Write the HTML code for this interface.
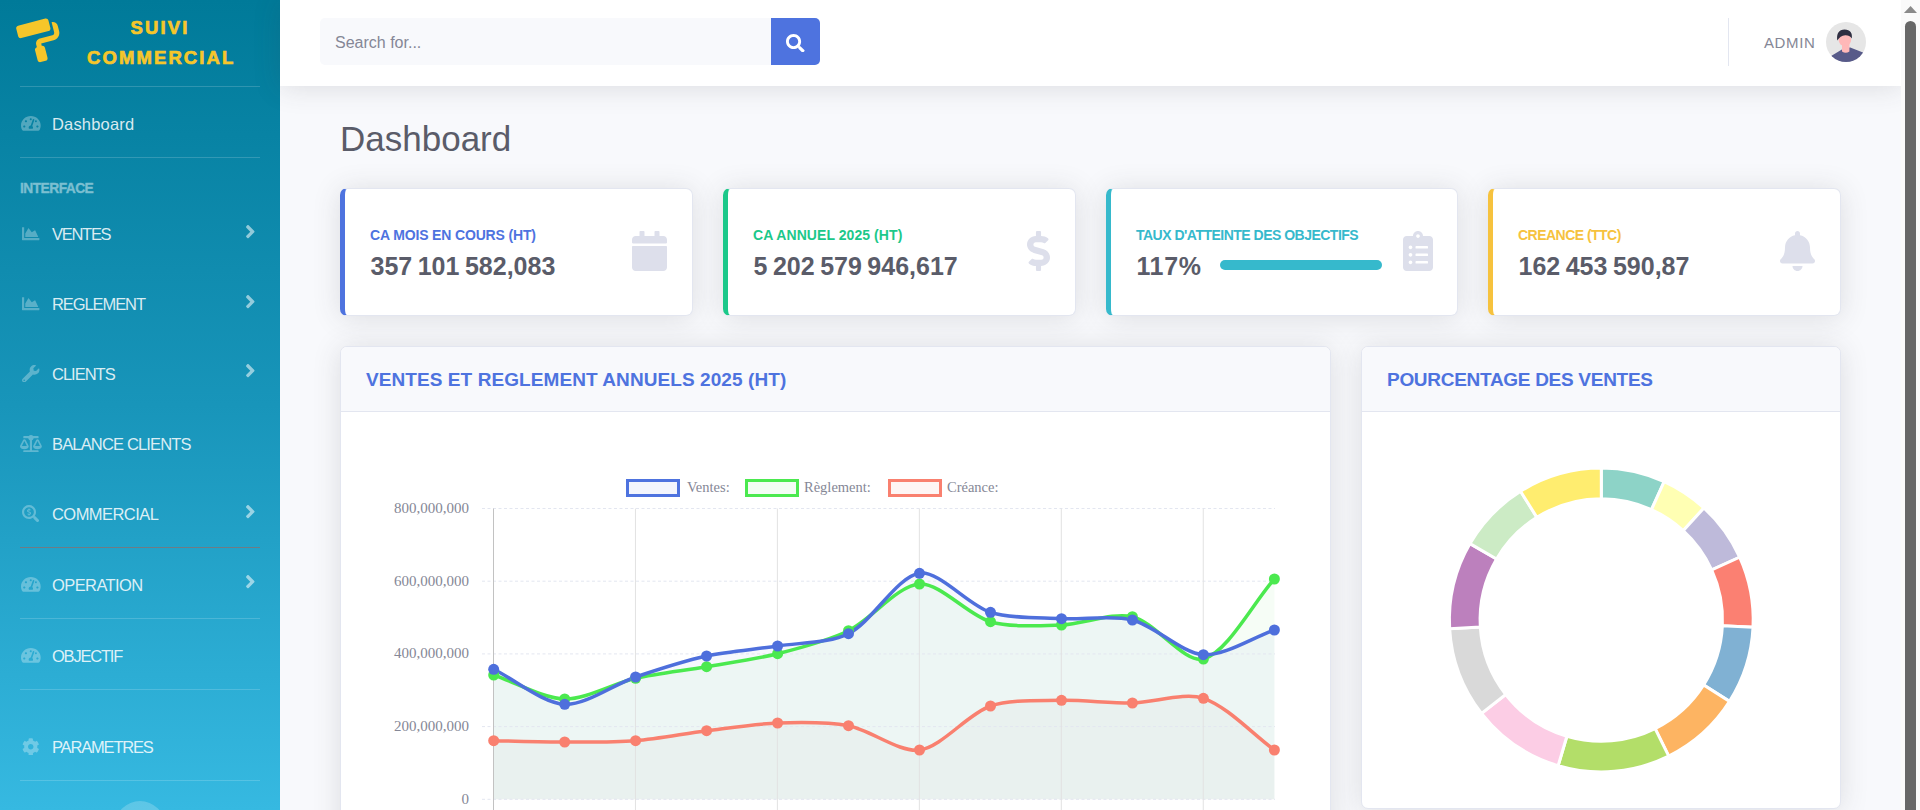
<!DOCTYPE html>
<html><head><meta charset="utf-8"><title>Dashboard</title>
<style>
*{box-sizing:border-box;margin:0;padding:0}
html,body{width:1920px;height:810px;overflow:hidden;background:#f8f9fc;font-family:"Liberation Sans",sans-serif}
.abs{position:absolute}
#side{left:0;top:0;width:280px;height:810px;background:linear-gradient(180deg,#007a99 0%,#1895ba 50%,#36b9e1 100%);overflow:hidden}
.brand{left:87px;width:146px;color:#f6c62a;font-weight:700;font-size:18.5px;letter-spacing:2.1px;-webkit-text-stroke:0.7px #f6c62a;text-align:center;line-height:1}
.hr{left:20px;width:240px;height:1px;background:rgba(255,255,255,.17)}
.nav{left:52px;color:rgba(255,255,255,.85);font-size:16px;line-height:1;white-space:nowrap}
.navu{letter-spacing:-0.55px}
.ico{fill:rgba(255,255,255,.3)}
.chev{fill:rgba(255,255,255,.55)}
.head{left:20px;color:#7bbfd1;font-weight:700;font-size:13.8px;letter-spacing:-0.55px;line-height:1;-webkit-text-stroke:0.35px #7bbfd1}
#top{left:280px;top:0;width:1622px;height:86px;background:#fff;box-shadow:0 2px 28px 0 rgba(58,59,69,.15)}
#scroll{left:1901px;top:0;width:19px;height:810px;background:#fafafa}
.card{background:#fff;border:1px solid #e3e6f0;border-radius:7px;box-shadow:0 2px 28px 0 rgba(58,59,69,.15);overflow:hidden}
.bl{position:absolute;left:0;top:0;bottom:0;width:5px}
.lab{font-weight:700;font-size:14px;line-height:1;white-space:nowrap;letter-spacing:-0.3px}
.num{font-weight:700;font-size:25px;color:#5a5c69;line-height:1;white-space:nowrap}
.cico{fill:#dddfeb}
.chd{background:#f8f9fc;border-bottom:1px solid #e3e6f0;height:65px}
.ctl{color:#4e73df;font-weight:700;font-size:19px;line-height:1;white-space:nowrap}
</style></head>
<body>
<!-- SIDEBAR -->
<div id="side" class="abs">
  <svg class="abs" style="left:0;top:0" width="80" height="80" viewBox="0 0 80 80">
    <g transform="translate(15.6 26.3) rotate(-14.5) scale(0.08)"><path fill="#f6c62a" d="M416 128V32c0-17.67-14.33-32-32-32H32C14.33 0 0 14.33 0 32v96c0 17.67 14.33 32 32 32h352c17.670 0 32-14.33 32-32zm32-64v128c0 17.67-14.33 32-32 32H256c-35.35 0-64 28.65-64 64v32c-17.67 0-32 14.33-32 32v128c0 17.67 14.33 32 32 32h64c17.67 0 32-14.33 32-32V352c0-17.67-14.33-32-32-32v-32h160c53.02 0 96-42.98 96-96v-64c0-35.35-28.65-64-64-64z"/></g>
  </svg>
  <div class="abs brand" style="top:19.3px">SUIVI</div>
  <div class="abs brand" style="top:49.3px">COMMERCIAL</div>
  <div class="abs hr" style="top:86px"></div>

  <div class="abs hr" style="top:157px"></div>
  <div class="abs head" style="top:181.5px">INTERFACE</div>

  <svg class="abs" style="left:21px;top:114.85px" width="19.70" height="16.84" viewBox="0 0 576 512" preserveAspectRatio="none"><path class="ico" d="M288 32C128.94 32 0 160.94 0 320c0 52.8 14.25 102.26 39.06 144.8 5.61 9.62 16.3 15.2 27.44 15.2h443c11.14 0 21.83-5.58 27.44-15.2C561.75 422.26 576 372.8 576 320c0-159.06-128.94-288-288-288zm0 64c14.71 0 26.58 10.13 30.32 23.65-1.11 2.26-2.64 4.23-3.450 6.67l-9.22 27.67c-5.13 3.49-10.97 6.01-17.64 6.01-17.67 0-32-14.33-32-32S270.33 96 288 96zM96 384c-17.67 0-32-14.33-32-32s14.33-32 32-32 32 14.33 32 32-14.33 32-32 32zm48-160c-17.67 0-32-14.33-32-32s14.33-32 32-32 32 14.33 32 32-14.33 32-32 32zm246.77-72.41l-61.33 184C343.13 347.33 352 364.54 352 384c0 11.72-3.38 22.55-8.88 32H232.88c-5.5-9.45-8.88-20.28-8.88-32 0-33.94 26.5-61.43 59.9-63.59l61.34-184.01c4.17-12.56 17.73-19.45 30.36-15.17 12.57 4.19 19.35 17.79 15.17 30.36zm14.66 57.2l15.52-46.55c3.47-1.29 7.13-2.23 11.05-2.23 17.67 0 32 14.33 32 32s-14.33 32-32 32c-11.38 0-20.89-6.27-26.57-15.22zM480 384c-17.67 0-32-14.33-32-32s14.33-32 32-32 32 14.33 32 32-14.33 32-32 32z"/></svg>
<div class="abs nav" style="top:116px;font-size:16.5px;letter-spacing:0.17px">Dashboard</div>
<svg class="abs" style="left:22.2px;top:225.0px" width="17.41" height="17.41" viewBox="0 0 512 512" preserveAspectRatio="none"><path class="ico" d="M500 384c6.6 0 12 5.4 12 12v40c0 6.6-5.4 12-12 12H12c-6.6 0-12-5.4-12-12V76c0-6.6 5.4-12 12-12h40c6.6 0 12 5.4 12 12v308h436zM372.7 159.5L288 216l-85.3-113.7c-5.1-6.8-15.5-6.3-19.9 1L96 248v104h384l-89.9-187.8c-3.2-6.5-11.4-8.7-17.4-4.7z"/></svg>
<div class="abs nav" style="top:226px;font-size:16.5px;letter-spacing:-1.28px">VENTES</div>
<svg class="abs" style="left:245px;top:220.5px" width="10.62" height="21.25" viewBox="0 0 256 512" preserveAspectRatio="none"><path class="chev" d="M224.3 273l-136 136c-9.4 9.4-24.6 9.4-33.9 0l-22.6-22.6c-9.4-9.4-9.4-24.6 0-33.9l96.4-96.4-96.4-96.4c-9.4-9.4-9.4-24.6 0-33.9L54.3 103c9.4-9.4 24.6-9.4 33.9 0l136 136c9.5 9.4 9.5 24.6.1 34z"/></svg>
<svg class="abs" style="left:22.2px;top:295.0px" width="17.41" height="17.41" viewBox="0 0 512 512" preserveAspectRatio="none"><path class="ico" d="M500 384c6.6 0 12 5.4 12 12v40c0 6.6-5.4 12-12 12H12c-6.6 0-12-5.4-12-12V76c0-6.6 5.4-12 12-12h40c6.6 0 12 5.4 12 12v308h436zM372.7 159.5L288 216l-85.3-113.7c-5.1-6.8-15.5-6.3-19.9 1L96 248v104h384l-89.9-187.8c-3.2-6.5-11.4-8.7-17.4-4.7z"/></svg>
<div class="abs nav" style="top:296px;font-size:16.5px;letter-spacing:-1.09px">REGLEMENT</div>
<svg class="abs" style="left:245px;top:290.5px" width="10.62" height="21.25" viewBox="0 0 256 512" preserveAspectRatio="none"><path class="chev" d="M224.3 273l-136 136c-9.4 9.4-24.6 9.4-33.9 0l-22.6-22.6c-9.4-9.4-9.4-24.6 0-33.9l96.4-96.4-96.4-96.4c-9.4-9.4-9.4-24.6 0-33.9L54.3 103c9.4-9.4 24.6-9.4 33.9 0l136 136c9.5 9.4 9.5 24.6.1 34z"/></svg>
<svg class="abs" style="left:22.3px;top:365px" width="17.41" height="17.41" viewBox="0 0 512 512" preserveAspectRatio="none"><path class="ico" d="M507.73 109.1c-2.24-9.03-13.54-12.09-20.12-5.51l-74.36 74.36-67.88-11.31-11.31-67.88 74.36-74.36c6.62-6.62 3.43-17.9-5.66-20.16-47.38-11.74-99.55.91-136.58 37.93-39.64 39.64-50.55 97.1-34.05 147.2L18.74 402.76c-24.99 24.99-24.99 65.51 0 90.5 24.99 24.99 65.51 24.99 90.5 0l213.21-213.21c50.12 16.71 107.47 5.68 147.37-34.22 37.07-37.07 49.7-89.32 37.91-136.73zM64 472c-13.25 0-24-10.75-24-24 0-13.26 10.75-24 24-24s24 10.74 24 24c0 13.25-10.75 24-24 24z"/></svg>
<div class="abs nav" style="top:366px;font-size:16.5px;letter-spacing:-1.0px">CLIENTS</div>
<svg class="abs" style="left:245px;top:360.3px" width="10.62" height="21.25" viewBox="0 0 256 512" preserveAspectRatio="none"><path class="chev" d="M224.3 273l-136 136c-9.4 9.4-24.6 9.4-33.9 0l-22.6-22.6c-9.4-9.4-9.4-24.6 0-33.9l96.4-96.4-96.4-96.4c-9.4-9.4-9.4-24.6 0-33.9L54.3 103c9.4-9.4 24.6-9.4 33.9 0l136 136c9.5 9.4 9.5 24.6.1 34z"/></svg>
<svg class="abs" style="left:19.8px;top:434.7px" width="21.89" height="17.51" viewBox="0 0 640 512" preserveAspectRatio="none"><path class="ico" d="M256 336h-.02c0-16.18 1.34-8.73-85.05-181.51-17.65-35.29-68.19-35.36-85.87 0C-2.06 328.75.02 320.33.02 336H0c0 44.18 57.31 80 128 80s128-35.82 128-80zM128 176l72 144H56l72-144zm511.98 160c0-16.18 1.34-8.73-85.05-181.51-17.65-35.29-68.19-35.36-85.87 0-87.12 174.26-85.04 165.84-85.04 181.51H384c0 44.18 57.31 80 128 80s128-35.82 128-80h-.02zM440 320l72-144 72 144H440zm88 128H352V153.3c23.51-10.29 41.16-31.48 46.39-57.3H528c8.84 0 16-7.16 16-16V48c0-8.84-7.16-16-16-16H383.64C369.04 12.68 346.09 0 320 0s-49.04 12.68-63.64 32H112c-8.84 0-16 7.16-16 16v32c0 8.84 7.16 16 16 16h129.61c5.23 25.82 22.87 47.01 46.39 57.3V448H112c-8.84 0-16 7.16-16 16v32c0 8.84 7.16 16 16 16h416c8.84 0 16-7.16 16-16v-32c0-8.84-7.16-16-16-16z"/></svg>
<div class="abs nav" style="top:436px;font-size:16.5px;letter-spacing:-0.84px">BALANCE CLIENTS</div>
<svg class="abs" style="left:22.2px;top:505px" width="17.25" height="17.25" viewBox="0 0 512 512" preserveAspectRatio="none"><path class="ico" d="M505.04 442.66l-99.71-99.69c-4.5-4.5-10.6-7-17-7h-16.3c27.6-35.3 44-79.69 44-127.99C416.03 93.09 322.92 0 208.02 0S0 93.09 0 207.98s93.11 207.98 208.02 207.98c48.3 0 92.71-16.4 128.01-44v16.3c0 6.4 2.5 12.5 7 17l99.71 99.69c9.4 9.4 24.6 9.4 33.9 0l28.3-28.3c9.4-9.4 9.4-24.59.1-33.99zm-297.02-90.7c-79.54 0-144-64.34-144-143.98 0-79.53 64.35-143.98 144-143.98 79.54 0 144 64.34 144 143.98 0 79.53-64.35 143.98-144 143.980zm27.11-152.54l-45.01-13.5c-5.16-1.55-8.77-6.78-8.77-12.73 0-7.27 5.3-13.19 11.8-13.19h28.11c4.56 0 8.96 1.29 12.82 3.72 3.24 2.03 7.36 1.91 10.13-.73l11.75-11.21c3.53-3.37 3.33-9.21-.57-12.14-9.1-6.83-20.08-10.77-31.37-11.35V112c0-4.42-3.58-8-8-8h-16c-4.42 0-8 3.58-8 8v16.12c-23.63.63-42.68 20.55-42.68 45.07 0 19.97 12.99 37.81 31.58 43.39l45.01 13.5c5.16 1.55 8.77 6.78 8.77 12.73 0 7.27-5.3 13.19-11.8 13.19h-28.1c-4.56 0-8.96-1.29-12.82-3.72-3.24-2.03-7.36-1.91-10.13.73l-11.75 11.21c-3.53 3.37-3.33 9.21.57 12.14 9.1 6.83 20.08 10.77 31.37 11.35V304c0 4.42 3.58 8 8 8h16c4.42 0 8-3.58 8-8v-16.12c23.63-.63 42.68-20.54 42.68-45.07 0-19.97-12.99-37.81-31.59-43.39z"/></svg>
<div class="abs nav" style="top:506px;font-size:16.5px;letter-spacing:-0.56px">COMMERCIAL</div>
<svg class="abs" style="left:245px;top:500.5px" width="10.62" height="21.25" viewBox="0 0 256 512" preserveAspectRatio="none"><path class="chev" d="M224.3 273l-136 136c-9.4 9.4-24.6 9.4-33.9 0l-22.6-22.6c-9.4-9.4-9.4-24.6 0-33.9l96.4-96.4-96.4-96.4c-9.4-9.4-9.4-24.6 0-33.9L54.3 103c9.4-9.4 24.6-9.4 33.9 0l136 136c9.5 9.4 9.5 24.6.1 34z"/></svg>
<svg class="abs" style="left:21px;top:576.05px" width="19.70" height="16.84" viewBox="0 0 576 512" preserveAspectRatio="none"><path class="ico" d="M288 32C128.94 32 0 160.94 0 320c0 52.8 14.25 102.26 39.06 144.8 5.61 9.62 16.3 15.2 27.44 15.2h443c11.14 0 21.83-5.58 27.44-15.2C561.75 422.26 576 372.8 576 320c0-159.06-128.94-288-288-288zm0 64c14.71 0 26.58 10.13 30.32 23.65-1.11 2.26-2.64 4.23-3.450 6.67l-9.22 27.67c-5.13 3.49-10.97 6.01-17.64 6.01-17.67 0-32-14.33-32-32S270.33 96 288 96zM96 384c-17.67 0-32-14.33-32-32s14.33-32 32-32 32 14.33 32 32-14.33 32-32 32zm48-160c-17.67 0-32-14.33-32-32s14.33-32 32-32 32 14.33 32 32-14.33 32-32 32zm246.77-72.41l-61.33 184C343.13 347.33 352 364.54 352 384c0 11.72-3.38 22.55-8.88 32H232.88c-5.5-9.45-8.88-20.28-8.88-32 0-33.94 26.5-61.43 59.9-63.59l61.34-184.01c4.17-12.56 17.73-19.45 30.36-15.17 12.57 4.19 19.35 17.79 15.17 30.36zm14.66 57.2l15.52-46.55c3.47-1.29 7.13-2.23 11.05-2.23 17.67 0 32 14.33 32 32s-14.33 32-32 32c-11.38 0-20.89-6.27-26.57-15.22zM480 384c-17.67 0-32-14.33-32-32s14.33-32 32-32 32 14.33 32 32-14.33 32-32 32z"/></svg>
<div class="abs nav" style="top:577px;font-size:16.5px;letter-spacing:-0.59px">OPERATION</div>
<svg class="abs" style="left:245px;top:571.25px" width="10.62" height="21.25" viewBox="0 0 256 512" preserveAspectRatio="none"><path class="chev" d="M224.3 273l-136 136c-9.4 9.4-24.6 9.4-33.9 0l-22.6-22.6c-9.4-9.4-9.4-24.6 0-33.9l96.4-96.4-96.4-96.4c-9.4-9.4-9.4-24.6 0-33.9L54.3 103c9.4-9.4 24.6-9.4 33.9 0l136 136c9.5 9.4 9.5 24.6.1 34z"/></svg>
<svg class="abs" style="left:21px;top:646.85px" width="19.70" height="16.84" viewBox="0 0 576 512" preserveAspectRatio="none"><path class="ico" d="M288 32C128.94 32 0 160.94 0 320c0 52.8 14.25 102.26 39.06 144.8 5.61 9.62 16.3 15.2 27.44 15.2h443c11.14 0 21.83-5.58 27.44-15.2C561.75 422.26 576 372.8 576 320c0-159.06-128.94-288-288-288zm0 64c14.71 0 26.58 10.13 30.32 23.65-1.11 2.26-2.64 4.23-3.450 6.67l-9.22 27.67c-5.13 3.49-10.97 6.01-17.64 6.01-17.67 0-32-14.33-32-32S270.33 96 288 96zM96 384c-17.67 0-32-14.33-32-32s14.33-32 32-32 32 14.33 32 32-14.33 32-32 32zm48-160c-17.67 0-32-14.33-32-32s14.33-32 32-32 32 14.33 32 32-14.33 32-32 32zm246.77-72.41l-61.33 184C343.13 347.33 352 364.54 352 384c0 11.72-3.38 22.55-8.88 32H232.88c-5.5-9.45-8.88-20.28-8.88-32 0-33.94 26.5-61.43 59.9-63.59l61.34-184.01c4.17-12.56 17.73-19.45 30.36-15.17 12.57 4.19 19.35 17.79 15.17 30.36zm14.66 57.2l15.52-46.55c3.47-1.29 7.13-2.23 11.05-2.23 17.67 0 32 14.33 32 32s-14.33 32-32 32c-11.38 0-20.89-6.27-26.57-15.22zM480 384c-17.67 0-32-14.33-32-32s14.33-32 32-32 32 14.33 32 32-14.33 32-32 32z"/></svg>
<div class="abs nav" style="top:648px;font-size:16.5px;letter-spacing:-1.21px">OBJECTIF</div>
<svg class="abs" style="left:22.3px;top:737.6px" width="17.51" height="17.51" viewBox="0 0 512 512" preserveAspectRatio="none"><path class="ico" d="M487.4 315.7l-42.6-24.6c4.3-23.2 4.3-47 0-70.2l42.6-24.6c4.9-2.8 7.1-8.6 5.5-14-11.1-35.6-30-67.8-54.7-94.6-3.8-4.1-10-5.1-14.8-2.3L380.8 110c-17.9-15.4-38.5-27.3-60.8-35.1V25.8c0-5.6-3.9-10.5-9.4-11.7-36.7-8.2-74.3-7.8-109.2 0-5.5 1.2-9.4 6.1-9.4 11.7V75c-22.2 7.9-42.8 19.8-60.8 35.1L88.7 85.5c-4.9-2.8-11-1.9-14.8 2.3-24.7 26.7-43.6 58.9-54.7 94.6-1.7 5.4.6 11.2 5.5 14L67.3 221c-4.3 23.2-4.3 47 0 70.2l-42.6 24.6c-4.9 2.8-7.1 8.6-5.5 14 11.1 35.6 30 67.8 54.7 94.6 3.8 4.1 10 5.1 14.8 2.3l42.6-24.6c17.9 15.4 38.5 27.3 60.8 35.1v49.2c0 5.6 3.9 10.5 9.4 11.7 36.7 8.2 74.3 7.8 109.2 0 5.5-1.2 9.4-6.1 9.4-11.7v-49.2c22.2-7.9 42.8-19.8 60.8-35.1l42.6 24.6c4.9 2.8 11 1.9 14.8-2.3 24.7-26.7 43.6-58.9 54.7-94.6 1.5-5.5-.7-11.3-5.6-14.1zM256 336c-44.1 0-80-35.9-80-80s35.9-80 80-80 80 35.9 80 80-35.9 80-80 80z"/></svg>
<div class="abs nav" style="top:739px;font-size:16.5px;letter-spacing:-1.18px">PARAMETRES</div>
<div class="abs" style="left:20px;top:547px;width:240px;height:1px;background:#6f7c84"></div>
<div class="abs hr" style="top:618px"></div>
<div class="abs hr" style="top:689px"></div>
<div class="abs hr" style="top:780px"></div>
<div class="abs" style="left:115px;top:801px;width:50px;height:50px;border-radius:50%;background:rgba(255,255,255,.2)"></div>
</div>

<!-- TOPBAR -->
<div id="top" class="abs">
  <div class="abs" style="left:40px;top:18px;width:451px;height:47px;background:#f8f9fc;border-radius:5px 0 0 5px"></div>
  <div class="abs" style="left:55px;top:35px;color:#858796;font-size:16px;line-height:1">Search for...</div>
  <div class="abs" style="left:491px;top:18px;width:49px;height:47px;background:#4e73df;border-radius:0 5px 5px 0"></div>
  <svg class="abs" style="left:506.3px;top:33.7px" width="18.6" height="18.6" viewBox="0 0 512 512"><path fill="#fff" d="M505 442.7L405.3 343c-4.5-4.5-10.6-7-17-7H372c27.6-35.3 44-79.7 44-128C416 93.1 322.9 0 208 0S0 93.1 0 208s93.1 208 208 208c48.3 0 92.7-16.4 128-44v16.3c0 6.4 2.5 12.5 7 17l99.7 99.7c9.4 9.4 24.6 9.4 33.9 0l28.3-28.300c9.4-9.4 9.4-24.6.1-34zM208 336c-70.7 0-128-57.2-128-128 0-70.7 57.2-128 128-128 70.7 0 128 57.2 128 128 0 70.7-57.2 128-128 128z"/></svg>
  <div class="abs" style="left:1448px;top:18px;width:1px;height:48px;background:#e3e6f0"></div>
  <div class="abs" style="left:1484px;top:34.7px;color:#858796;font-size:15px;line-height:1;letter-spacing:0.6px">ADMIN</div>
  <svg class="abs" style="left:1546px;top:22px" width="40" height="40" viewBox="0 0 40 40">
    <defs><clipPath id="av"><circle cx="20" cy="20" r="20"/></clipPath></defs>
    <circle cx="20" cy="20" r="20" fill="#e6e6e6"/>
    <g clip-path="url(#av)">
      <path d="M5.5 33.8 L16.3 27.2 Q19.8 31.8 23.6 25.3 L37 30.4 L40 40 L0 40 Z" fill="#575a89"/>
      <path d="M16 21 H23.4 V29.6 Q19.7 32 16 29.6 Z" fill="#ffb8b8"/>
      <ellipse cx="18.9" cy="17.7" rx="6.3" ry="6.3" fill="#ffb8b8"/>
      <path d="M11.3 18.6 C10.3 12 12.8 7.6 18.6 7.6 C24.3 7.6 26.6 11.2 25.8 16.4 C24.2 14.2 22.2 13.1 19.2 13.2 C15.7 13.3 13.3 15.2 11.3 18.6 Z" fill="#2f2e41"/>
    </g>
  </svg>
</div>

<!-- SCROLLBAR -->
<div id="scroll" class="abs">
  <svg class="abs" style="left:0;top:0" width="19" height="20" viewBox="0 0 19 20"><path d="M2.9 12.9 L9.6 5.9 L16 12.9Z" fill="#8a8a8a"/></svg>
  <div class="abs" style="left:4px;top:21px;width:11px;height:800px;background:#676767;border-radius:5.5px 5.5px 0 0"></div>
</div>

<!-- MAIN CONTENT -->
<div class="abs" style="left:340px;top:121px;color:#5a5c69;font-size:35px;line-height:1">Dashboard</div>

<div class="abs card" style="left:340px;top:188px;width:353px;height:128px;border-left:5px solid #4e73df"></div>
<div class="abs lab" style="left:370px;top:228px;color:#4e73df;letter-spacing:-0.15px">CA MOIS EN COURS (HT)</div>
<div class="abs num" style="left:370.5px;top:254px">357<span style="display:inline-block;width:5.5px"></span>101<span style="display:inline-block;width:5.5px"></span>582,083</div>
<svg class="abs" style="left:632px;top:231px" width="35" height="40" viewBox="0 0 448 512" preserveAspectRatio="none"><path class="cico" d="M12 192h424c6.6 0 12 5.4 12 12v260c0 26.5-21.5 48-48 48H48c-26.5 0-48-21.5-48-48V204c0-6.6 5.4-12 12-12zm436-44v-36c0-26.5-21.5-48-48-48h-48V12c0-6.6-5.4-12-12-12h-40c-6.6 0-12 5.4-12 12v52H160V12c0-6.6-5.4-12-12-12h-40c-6.6 0-12 5.4-12 12v52H48C21.5 64 0 85.5 0 112v36c0 6.6 5.4 12 12 12h424c6.6 0 12-5.4 12-12z"/></svg>
<div class="abs card" style="left:723px;top:188px;width:353px;height:128px;border-left:5px solid #1cc88a"></div>
<div class="abs lab" style="left:753px;top:228px;color:#1cc88a;letter-spacing:0.07px">CA ANNUEL 2025 (HT)</div>
<div class="abs num" style="left:753.5px;top:254px">5<span style="display:inline-block;width:5.5px"></span>202<span style="display:inline-block;width:5.5px"></span>579<span style="display:inline-block;width:5.5px"></span>946,617</div>
<svg class="abs" style="left:1027px;top:231px" width="23" height="40" viewBox="0 0 288 512" preserveAspectRatio="none"><path class="cico" d="M209.2 233.4l-108-31.6C88.7 198.2 80 186.5 80 173.5c0-16.3 13.2-29.5 29.5-29.5h66.3c12.2 0 24.2 3.7 34.2 10.5 6.1 4.1 14.3 3.1 19.5-2l34.8-34c7.1-6.9 6.1-18.4-1.8-24.5C238 74.8 207.4 64.1 176 64V16c0-8.8-7.2-16-16-16h-32c-8.8 0-16 7.2-16 16v48h-2.5C45.8 64-5.4 118.7.5 183.6c4.2 46.1 39.4 83.6 83.8 96.6l102.5 30c12.5 3.7 21.2 15.3 21.2 28.3 0 16.3-13.2 29.5-29.5 29.5h-66.3C100 368 88 364.3 78 357.5c-6.1-4.1-14.3-3.1-19.5 2l-34.8 34c-7.1 6.9-6.1 18.4 1.8 24.5 24.5 19.2 55.1 29.9 86.5 30v48c0 8.8 7.2 16 16 16h32c8.8 0 16-7.2 16-16v-48.2c46.6-.9 90.3-28.6 105.7-72.7 21.5-61.6-14.6-124.8-72.5-141.7z"/></svg>
<div class="abs card" style="left:1106px;top:188px;width:352px;height:128px;border-left:5px solid #36b9cc"></div>
<div class="abs lab" style="left:1136px;top:228px;color:#36b9cc;letter-spacing:-0.51px">TAUX D'ATTEINTE DES OBJECTIFS</div>
<div class="abs num" style="left:1136.5px;top:254px;letter-spacing:0.6px">117%</div>
<svg class="abs" style="left:1402.5px;top:231px" width="30" height="40" viewBox="0 0 384 512" preserveAspectRatio="none"><path class="cico" d="M336 64h-80c0-35.3-28.7-64-64-64s-64 28.7-64 64H48C21.5 64 0 85.5 0 112v352c0 26.5 21.5 48 48 48h288c26.5 0 48-21.5 48-48V112c0-26.5-21.5-48-48-48zM96 424c-13.3 0-24-10.7-24-24s10.7-24 24-24 24 10.7 24 24-10.7 24-24 24zm0-96c-13.3 0-24-10.7-24-24s10.7-24 24-24 24 10.7 24 24-10.7 24-24 24zm0-96c-13.3 0-24-10.7-24-24s10.7-24 24-24 24 10.7 24 24-10.7 24-24 24zm96-192c13.3 0 24 10.7 24 24s-10.7 24-24 24-24-10.7-24-24 10.7-24 24-24zm128 368c0 4.4-3.6 8-8 8H168c-4.4 0-8-3.6-8-8v-16c0-4.4 3.6-8 8-8h144c4.4 0 8 3.6 8 8v16zm0-96c0 4.4-3.6 8-8 8H168c-4.4 0-8-3.6-8-8v-16c0-4.4 3.6-8 8-8h144c4.4 0 8 3.6 8 8v16zm0-96c0 4.4-3.6 8-8 8H168c-4.4 0-8-3.6-8-8v-16c0-4.4 3.6-8 8-8h144c4.4 0 8 3.6 8 8v16z"/></svg>
<div class="abs card" style="left:1488px;top:188px;width:353px;height:128px;border-left:5px solid #f6c23e"></div>
<div class="abs lab" style="left:1518px;top:228px;color:#f6c23e;letter-spacing:-0.53px">CREANCE (TTC)</div>
<div class="abs num" style="left:1518.5px;top:254px">162<span style="display:inline-block;width:5.5px"></span>453<span style="display:inline-block;width:5.5px"></span>590,87</div>
<svg class="abs" style="left:1780px;top:231px" width="35" height="40" viewBox="0 0 448 512" preserveAspectRatio="none"><path class="cico" d="M224 512c35.32 0 63.97-28.65 63.97-64H160.03c0 35.35 28.65 64 63.97 64zm215.39-149.71c-19.32-20.76-55.47-51.99-55.47-154.29 0-77.7-54.48-139.9-127.94-155.16V32c0-17.67-14.32-32-31.98-32s-31.98 14.33-31.98 32v20.84C118.56 68.1 64.08 130.3 64.08 208c0 102.3-36.15 133.53-55.47 154.29-6 6.45-8.66 14.16-8.61 21.71.11 16.4 12.98 32 32.1 32h383.8c19.12 0 32-15.6 32.1-32 .05-7.55-2.61-15.27-8.61-21.710z"/></svg>
<div class="abs" style="left:1220px;top:260px;width:162px;height:10px;border-radius:5px;background:#36b9cc"></div>

<!-- chart card -->
<div class="abs card" style="left:340px;top:346px;width:991px;height:520px">
  <div class="chd"></div>
  <div class="abs ctl" style="left:25px;top:23px;letter-spacing:0.08px">VENTES ET REGLEMENT ANNUELS 2025 (HT)</div>
</div>
<!-- donut card -->
<div class="abs card" style="left:1361px;top:346px;width:480px;height:463px">
  <div class="chd"></div>
  <div class="abs ctl" style="left:25px;top:23px;letter-spacing:-0.29px">POURCENTAGE DES VENTES</div>
</div>

<svg class="abs" style="left:0;top:0" width="1920" height="810" viewBox="0 0 1920 810">
<path d="M493.7 740.7 C515.0 741.1 543.4 742.0 564.7 742.0 C586.0 742.0 614.5 742.4 635.6 740.7 C657.0 739.0 685.3 733.4 706.6 730.7 C727.9 728.1 756.2 723.8 777.6 723.0 C798.8 722.3 827.8 721.8 848.5 725.7 C870.4 729.9 899.4 752.8 919.5 750.0 C942.0 746.9 967.5 714.0 990.5 706.0 C1010.1 699.1 1040.1 700.8 1061.5 700.3 C1082.7 699.9 1111.2 703.3 1132.4 703.0 C1153.7 702.7 1184.3 692.0 1203.4 698.3 C1226.9 706.1 1253.1 734.5 1274.4 750.0 L1274.4 799.3 L493.7 799.3 Z" fill="rgba(150,130,130,0.04)"/>
<path d="M493.7 675.0 C515.0 682.2 543.2 698.5 564.7 699.0 C585.8 699.5 614.1 683.2 635.6 678.3 C656.6 673.5 685.4 670.4 706.6 666.7 C727.9 663.0 756.6 659.0 777.6 653.7 C799.2 648.2 828.6 640.5 848.5 630.7 C871.2 619.6 897.6 585.4 919.5 584.0 C940.2 582.7 967.9 615.2 990.5 621.7 C1010.5 627.5 1040.2 625.7 1061.5 625.0 C1082.8 624.2 1112.7 612.0 1132.4 616.7 C1155.3 622.2 1184.8 663.9 1203.4 659.0 C1227.4 652.6 1253.1 603.0 1274.4 579.0 L1274.4 799.3 L493.7 799.3 Z" fill="rgba(70,210,70,0.05)"/>
<path d="M493.7 669.3 C515.0 679.8 543.0 703.1 564.7 704.3 C585.5 705.4 614.1 684.3 635.6 677.0 C656.6 669.9 685.0 660.7 706.6 656.0 C727.6 651.4 756.3 649.3 777.6 646.0 C798.9 642.6 830.0 643.2 848.5 633.7 C872.6 621.4 896.7 576.7 919.5 573.3 C939.3 570.3 967.8 605.1 990.5 612.3 C1010.4 618.7 1040.1 617.5 1061.5 618.7 C1082.7 619.9 1112.3 614.9 1132.4 620.0 C1154.9 625.7 1181.6 653.2 1203.4 654.7 C1224.2 656.2 1253.1 637.4 1274.4 630.0 L1274.4 799.3 L493.7 799.3 Z" fill="rgba(78,115,223,0.05)"/>
<line x1="482" y1="799.3" x2="1275" y2="799.3" stroke="#e3e6f0" stroke-width="1" stroke-dasharray="3 2.5"/>
<text x="469" y="803.8" text-anchor="end" font-family="Liberation Serif" font-size="15" fill="#858796">0</text>
<line x1="482" y1="726.6" x2="1275" y2="726.6" stroke="#e3e6f0" stroke-width="1" stroke-dasharray="3 2.5"/>
<text x="469" y="731.1" text-anchor="end" font-family="Liberation Serif" font-size="15" fill="#858796">200,000,000</text>
<line x1="482" y1="653.9" x2="1275" y2="653.9" stroke="#e3e6f0" stroke-width="1" stroke-dasharray="3 2.5"/>
<text x="469" y="658.4" text-anchor="end" font-family="Liberation Serif" font-size="15" fill="#858796">400,000,000</text>
<line x1="482" y1="581.2" x2="1275" y2="581.2" stroke="#e3e6f0" stroke-width="1" stroke-dasharray="3 2.5"/>
<text x="469" y="585.7" text-anchor="end" font-family="Liberation Serif" font-size="15" fill="#858796">600,000,000</text>
<line x1="482" y1="508.5" x2="1275" y2="508.5" stroke="#e3e6f0" stroke-width="1" stroke-dasharray="3 2.5"/>
<text x="469" y="513.0" text-anchor="end" font-family="Liberation Serif" font-size="15" fill="#858796">800,000,000</text>
<line x1="635.45" y1="508.5" x2="635.45" y2="810" stroke="#e2e2e2" stroke-width="1"/>
<line x1="777.40" y1="508.5" x2="777.40" y2="810" stroke="#e2e2e2" stroke-width="1"/>
<line x1="919.35" y1="508.5" x2="919.35" y2="810" stroke="#e2e2e2" stroke-width="1"/>
<line x1="1061.30" y1="508.5" x2="1061.30" y2="810" stroke="#e2e2e2" stroke-width="1"/>
<line x1="1203.25" y1="508.5" x2="1203.25" y2="810" stroke="#e2e2e2" stroke-width="1"/>
<line x1="493.5" y1="508.5" x2="493.5" y2="810" stroke="#c2c2c2" stroke-width="1"/>
<path d="M493.7 740.7 C515.0 741.1 543.4 742.0 564.7 742.0 C586.0 742.0 614.5 742.4 635.6 740.7 C657.0 739.0 685.3 733.4 706.6 730.7 C727.9 728.1 756.2 723.8 777.6 723.0 C798.8 722.3 827.8 721.8 848.5 725.7 C870.4 729.9 899.4 752.8 919.5 750.0 C942.0 746.9 967.5 714.0 990.5 706.0 C1010.1 699.1 1040.1 700.8 1061.5 700.3 C1082.7 699.9 1111.2 703.3 1132.4 703.0 C1153.7 702.7 1184.3 692.0 1203.4 698.3 C1226.9 706.1 1253.1 734.5 1274.4 750.0" fill="none" stroke="#f9806f" stroke-width="3.5"/>
<path d="M493.7 675.0 C515.0 682.2 543.2 698.5 564.7 699.0 C585.8 699.5 614.1 683.2 635.6 678.3 C656.6 673.5 685.4 670.4 706.6 666.7 C727.9 663.0 756.6 659.0 777.6 653.7 C799.2 648.2 828.6 640.5 848.5 630.7 C871.2 619.6 897.6 585.4 919.5 584.0 C940.2 582.7 967.9 615.2 990.5 621.7 C1010.5 627.5 1040.2 625.7 1061.5 625.0 C1082.8 624.2 1112.7 612.0 1132.4 616.7 C1155.3 622.2 1184.8 663.9 1203.4 659.0 C1227.4 652.6 1253.1 603.0 1274.4 579.0" fill="none" stroke="#4be94f" stroke-width="3.5"/>
<path d="M493.7 669.3 C515.0 679.8 543.0 703.1 564.7 704.3 C585.5 705.4 614.1 684.3 635.6 677.0 C656.6 669.9 685.0 660.7 706.6 656.0 C727.6 651.4 756.3 649.3 777.6 646.0 C798.9 642.6 830.0 643.2 848.5 633.7 C872.6 621.4 896.7 576.7 919.5 573.3 C939.3 570.3 967.8 605.1 990.5 612.3 C1010.4 618.7 1040.1 617.5 1061.5 618.7 C1082.7 619.9 1112.3 614.9 1132.4 620.0 C1154.9 625.7 1181.6 653.2 1203.4 654.7 C1224.2 656.2 1253.1 637.4 1274.4 630.0" fill="none" stroke="#4e6fdc" stroke-width="3.5"/>
<circle cx="493.7" cy="740.7" r="5.5" fill="#f9806f"/>
<circle cx="564.7" cy="742.0" r="5.5" fill="#f9806f"/>
<circle cx="635.6" cy="740.7" r="5.5" fill="#f9806f"/>
<circle cx="706.6" cy="730.7" r="5.5" fill="#f9806f"/>
<circle cx="777.6" cy="723.0" r="5.5" fill="#f9806f"/>
<circle cx="848.5" cy="725.7" r="5.5" fill="#f9806f"/>
<circle cx="919.5" cy="750.0" r="5.5" fill="#f9806f"/>
<circle cx="990.5" cy="706.0" r="5.5" fill="#f9806f"/>
<circle cx="1061.5" cy="700.3" r="5.5" fill="#f9806f"/>
<circle cx="1132.4" cy="703.0" r="5.5" fill="#f9806f"/>
<circle cx="1203.4" cy="698.3" r="5.5" fill="#f9806f"/>
<circle cx="1274.4" cy="750.0" r="5.5" fill="#f9806f"/>
<circle cx="493.7" cy="675.0" r="5.5" fill="#4be94f"/>
<circle cx="564.7" cy="699.0" r="5.5" fill="#4be94f"/>
<circle cx="635.6" cy="678.3" r="5.5" fill="#4be94f"/>
<circle cx="706.6" cy="666.7" r="5.5" fill="#4be94f"/>
<circle cx="777.6" cy="653.7" r="5.5" fill="#4be94f"/>
<circle cx="848.5" cy="630.7" r="5.5" fill="#4be94f"/>
<circle cx="919.5" cy="584.0" r="5.5" fill="#4be94f"/>
<circle cx="990.5" cy="621.7" r="5.5" fill="#4be94f"/>
<circle cx="1061.5" cy="625.0" r="5.5" fill="#4be94f"/>
<circle cx="1132.4" cy="616.7" r="5.5" fill="#4be94f"/>
<circle cx="1203.4" cy="659.0" r="5.5" fill="#4be94f"/>
<circle cx="1274.4" cy="579.0" r="5.5" fill="#4be94f"/>
<circle cx="493.7" cy="669.3" r="5.5" fill="#4e6fdc"/>
<circle cx="564.7" cy="704.3" r="5.5" fill="#4e6fdc"/>
<circle cx="635.6" cy="677.0" r="5.5" fill="#4e6fdc"/>
<circle cx="706.6" cy="656.0" r="5.5" fill="#4e6fdc"/>
<circle cx="777.6" cy="646.0" r="5.5" fill="#4e6fdc"/>
<circle cx="848.5" cy="633.7" r="5.5" fill="#4e6fdc"/>
<circle cx="919.5" cy="573.3" r="5.5" fill="#4e6fdc"/>
<circle cx="990.5" cy="612.3" r="5.5" fill="#4e6fdc"/>
<circle cx="1061.5" cy="618.7" r="5.5" fill="#4e6fdc"/>
<circle cx="1132.4" cy="620.0" r="5.5" fill="#4e6fdc"/>
<circle cx="1203.4" cy="654.7" r="5.5" fill="#4e6fdc"/>
<circle cx="1274.4" cy="630.0" r="5.5" fill="#4e6fdc"/>
<path d="M1601.30 468.10 A151.9 151.9 0 0 1 1664.17 481.72 L1651.46 509.67 A121.2 121.2 0 0 0 1601.30 498.80 Z" fill="#8dd3c7" stroke="#fff" stroke-width="3"/>
<path d="M1664.17 481.72 A151.9 151.9 0 0 1 1703.92 508.01 L1683.18 530.64 A121.2 121.2 0 0 0 1651.46 509.67 Z" fill="#ffffb3" stroke="#fff" stroke-width="3"/>
<path d="M1703.92 508.01 A151.9 151.9 0 0 1 1739.63 557.25 L1711.67 569.93 A121.2 121.2 0 0 0 1683.18 530.64 Z" fill="#bebada" stroke="#fff" stroke-width="3"/>
<path d="M1739.63 557.25 A151.9 151.9 0 0 1 1753.03 627.16 L1722.37 625.71 A121.2 121.2 0 0 0 1711.67 569.93 Z" fill="#fb8072" stroke="#fff" stroke-width="3"/>
<path d="M1753.03 627.16 A151.9 151.9 0 0 1 1729.55 701.39 L1703.63 684.94 A121.2 121.2 0 0 0 1722.37 625.71 Z" fill="#80b1d3" stroke="#fff" stroke-width="3"/>
<path d="M1729.55 701.39 A151.9 151.9 0 0 1 1668.72 756.12 L1655.10 728.61 A121.2 121.2 0 0 0 1703.63 684.94 Z" fill="#fdb462" stroke="#fff" stroke-width="3"/>
<path d="M1668.72 756.12 A151.9 151.9 0 0 1 1558.16 765.64 L1566.88 736.21 A121.2 121.2 0 0 0 1655.10 728.61 Z" fill="#b3de69" stroke="#fff" stroke-width="3"/>
<path d="M1558.16 765.64 A151.9 151.9 0 0 1 1481.52 713.41 L1505.73 694.53 A121.2 121.2 0 0 0 1566.88 736.21 Z" fill="#fccde5" stroke="#fff" stroke-width="3"/>
<path d="M1481.52 713.41 A151.9 151.9 0 0 1 1449.65 628.74 L1480.30 626.98 A121.2 121.2 0 0 0 1505.73 694.53 Z" fill="#d9d9d9" stroke="#fff" stroke-width="3"/>
<path d="M1449.65 628.74 A151.9 151.9 0 0 1 1470.02 543.59 L1496.55 559.03 A121.2 121.2 0 0 0 1480.30 626.98 Z" fill="#bc80bd" stroke="#fff" stroke-width="3"/>
<path d="M1470.02 543.59 A151.9 151.9 0 0 1 1520.58 491.32 L1536.89 517.33 A121.2 121.2 0 0 0 1496.55 559.03 Z" fill="#ccebc5" stroke="#fff" stroke-width="3"/>
<path d="M1520.58 491.32 A151.9 151.9 0 0 1 1601.30 468.10 L1601.30 498.80 A121.2 121.2 0 0 0 1536.89 517.33 Z" fill="#ffed6f" stroke="#fff" stroke-width="3"/>
</svg>
<div class="abs" style="left:626px;top:479px;width:54px;height:18px;border:3px solid #4e73df;background:#f3f5fd"></div>
<div class="abs" style="left:687px;top:478px;font-family:'Liberation Serif',serif;font-size:14.5px;color:#858796;line-height:18px;white-space:nowrap">Ventes:</div>
<div class="abs" style="left:744.5px;top:479px;width:54px;height:18px;border:3px solid #4be94f;background:#f3fdf4"></div>
<div class="abs" style="left:804px;top:478px;font-family:'Liberation Serif',serif;font-size:14.5px;color:#858796;line-height:18px;white-space:nowrap">R&egrave;glement:</div>
<div class="abs" style="left:888px;top:479px;width:54px;height:18px;border:3px solid #f9806f;background:#fef5f4"></div>
<div class="abs" style="left:947px;top:478px;font-family:'Liberation Serif',serif;font-size:14.5px;color:#858796;line-height:18px;white-space:nowrap">Cr&eacute;ance:</div>
</body></html>
